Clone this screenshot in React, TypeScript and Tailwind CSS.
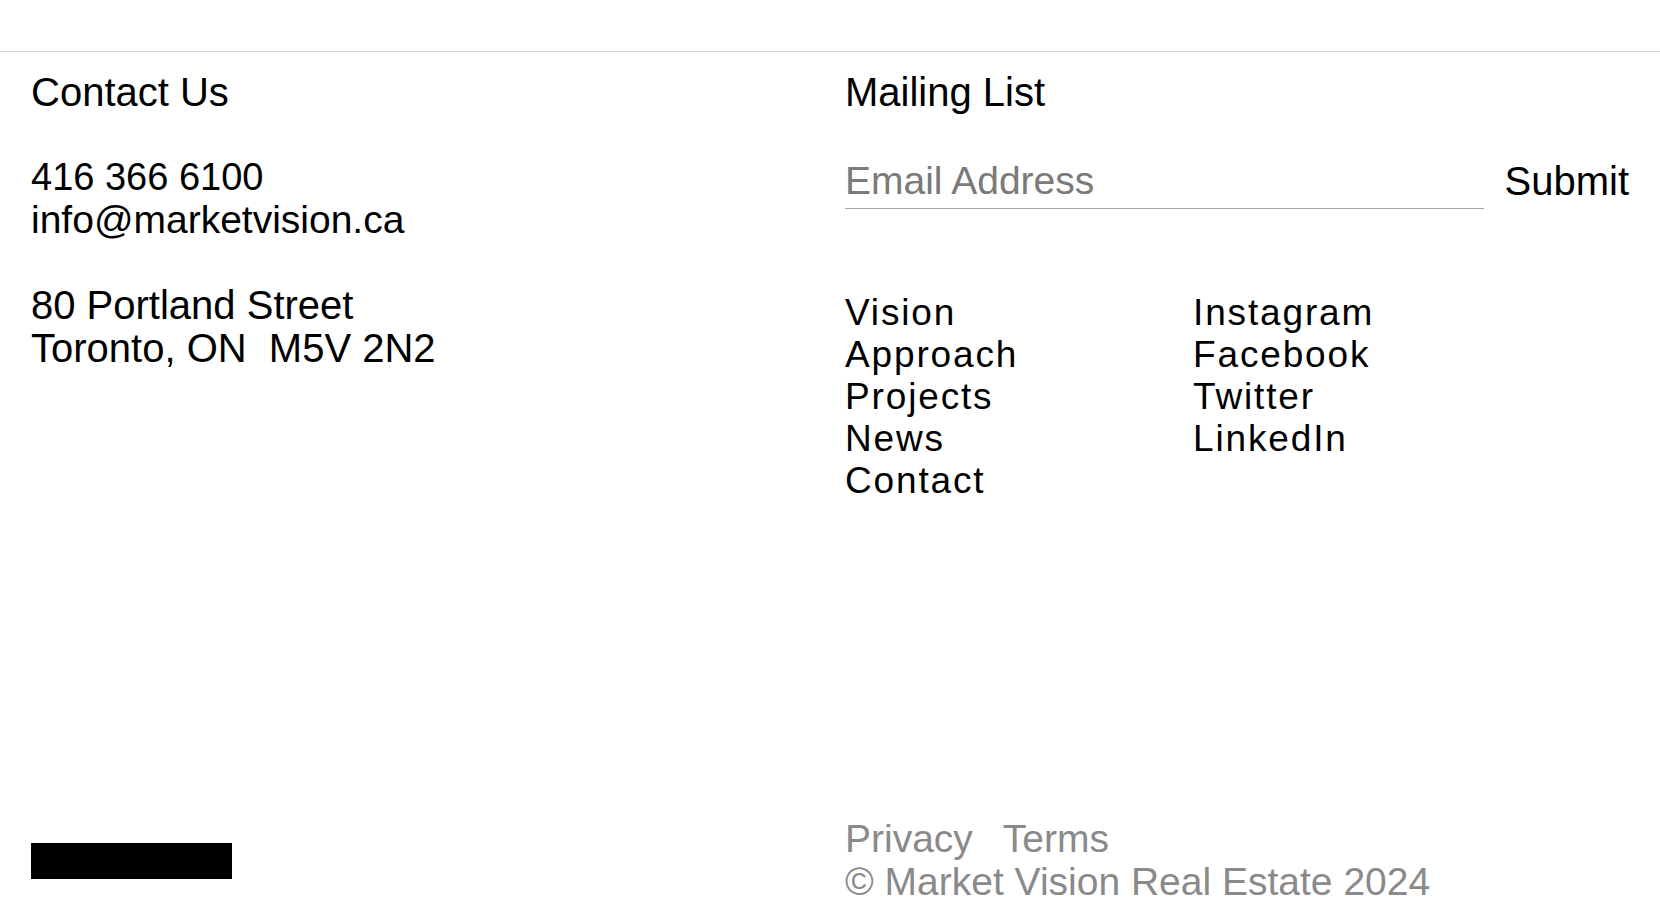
export default function App() {
  const navLeft = ["Vision", "Approach", "Projects", "News", "Contact"];
  const navRight = ["Instagram", "Facebook", "Twitter", "LinkedIn"];
  return (
    <div className="h-[901px] w-full overflow-hidden bg-white text-black flex flex-col font-['Liberation_Sans','Arial',sans-serif]">
      <div className="h-[52px] shrink-0 border-b border-[#d4d4d4]" />
      <div className="flex-1 grid grid-cols-2 gap-x-[30px] px-[31px] pt-[19px] content-start">
        <div>
          <h2 className="text-[40px] leading-[42.5px] font-normal">Contact Us</h2>
          <div className="mt-[42.5px] leading-[42.5px]">
            <p className="text-[38px]">416 366 6100</p>
            <p className="text-[39px]">info@marketvision.ca</p>
          </div>
          <div className="mt-[42.5px] text-[40px] leading-[43px]">
            <p>80 Portland Street</p>
            <p>{"Toronto, ON\u00a0 M5V 2N2"}</p>
          </div>
        </div>
        <div>
          <h2 className="text-[40px] leading-[42.5px] font-normal">Mailing List</h2>
          <form
            className="mt-[46.5px] flex items-start gap-[21px]"
            onSubmit={(e) => e.preventDefault()}
          >
            <input
              type="email"
              placeholder="Email Address"
              className="flex-1 min-w-0 h-[48.5px] pb-[5px] text-[39px] leading-[42.5px] bg-transparent border-b border-[#a3a3a3] outline-none placeholder:text-[#7a7a7a] text-black"
            />
            <button type="submit" className="text-[40px] leading-[42.5px] text-black">
              Submit
            </button>
          </form>
          <nav className="mt-[83px] flex text-[37px] leading-[42px] tracking-[0.05em]">
            <ul className="w-[348px]">
              {navLeft.map((n) => (
                <li key={n}>{n}</li>
              ))}
            </ul>
            <ul>
              {navRight.map((n) => (
                <li key={n}>{n}</li>
              ))}
            </ul>
          </nav>
        </div>
      </div>
      <div className="shrink-0 grid grid-cols-2 gap-x-[30px] px-[31px] items-end -mb-[2px]">
        <div className="pb-[24px]">
          <div className="w-[201px] h-[36px] bg-black" />
        </div>
        <div className="text-[39px] leading-[42.5px] text-[#8a8a8a]">
          <div>
            <span>Privacy</span>
            <span className="ml-[30px]">Terms</span>
          </div>
          <div>© Market Vision Real Estate 2024</div>
        </div>
      </div>
    </div>
  );
}
